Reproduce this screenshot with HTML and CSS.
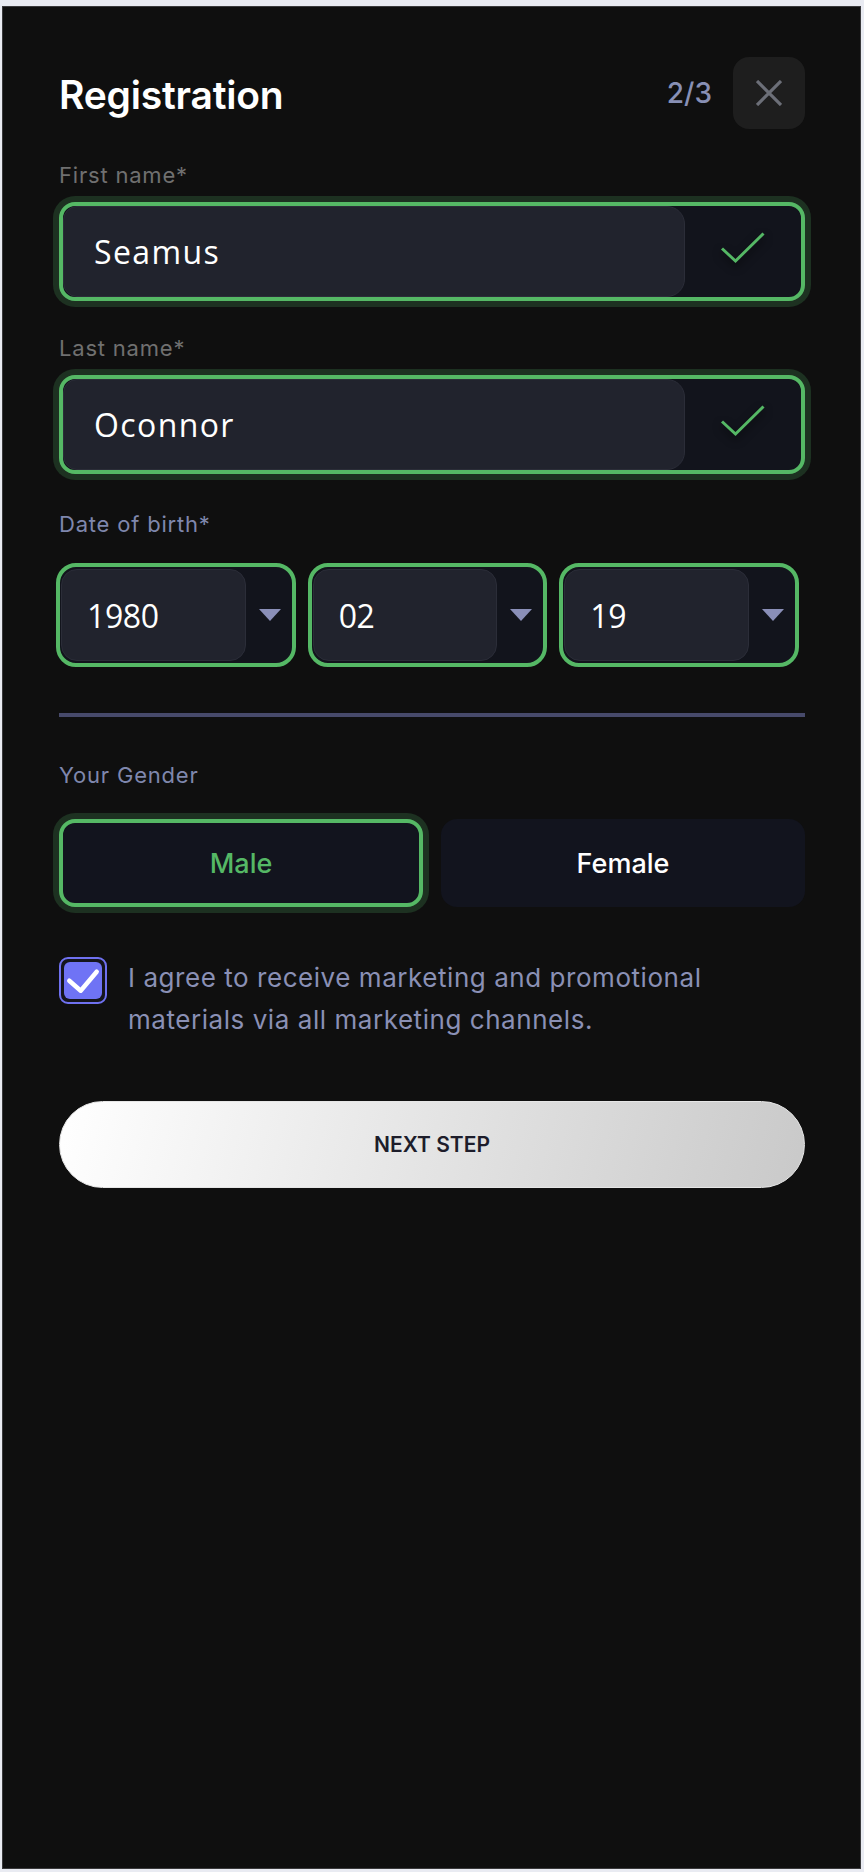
FILE: index.html
```html
<!DOCTYPE html>
<html lang="en">
<head>
<meta charset="utf-8">
<title>Registration</title>
<link rel="stylesheet" href="styles.css">
</head>
<body>
<div class="panel">
  <header class="head">
    <h1 class="title">Registration</h1>
    <div class="head-right">
      <span class="step">2/3</span>
      <button class="close" type="button" aria-label="Close">
        <svg width="26" height="26" viewBox="0 0 26 26"><path d="M1 1 L25 25 M25 1 L1 25" stroke="#6c6f78" stroke-width="3.2" fill="none"/></svg>
      </button>
    </div>
  </header>

  <div class="field">
    <div class="label label-muted">First name*</div>
    <div class="input valid">
      <div class="input-box">Seamus</div>
      <div class="input-status">
        <svg class="check" width="46" height="34" viewBox="0 0 46 34"><polyline points="2,17.5 15.5,30 43.5,2.5" fill="none" stroke="#55b865" stroke-width="3"/></svg>
      </div>
    </div>
  </div>

  <div class="field field-next">
    <div class="label label-muted">Last name*</div>
    <div class="input valid">
      <div class="input-box">Oconnor</div>
      <div class="input-status">
        <svg class="check" width="46" height="34" viewBox="0 0 46 34"><polyline points="2,17.5 15.5,30 43.5,2.5" fill="none" stroke="#55b865" stroke-width="3"/></svg>
      </div>
    </div>
  </div>

  <div class="field field-date">
    <div class="label label-accent label-date">Date of birth*</div>
    <div class="date-row">
      <div class="select">
        <div class="select-box">1980</div>
        <div class="select-arrow"><svg width="22" height="12" viewBox="0 0 22 12"><polygon points="0,0 22,0 11,12" fill="#8a8fb8"/></svg></div>
      </div>
      <div class="select">
        <div class="select-box">02</div>
        <div class="select-arrow"><svg width="22" height="12" viewBox="0 0 22 12"><polygon points="0,0 22,0 11,12" fill="#8a8fb8"/></svg></div>
      </div>
      <div class="select">
        <div class="select-box">19</div>
        <div class="select-arrow"><svg width="22" height="12" viewBox="0 0 22 12"><polygon points="0,0 22,0 11,12" fill="#8a8fb8"/></svg></div>
      </div>
    </div>
  </div>

  <div class="divider"></div>

  <div class="field field-gender">
    <div class="label label-accent label-gender">Your Gender</div>
    <div class="gender-row">
      <button class="gender gender-selected" type="button">Male</button>
      <button class="gender" type="button">Female</button>
    </div>
  </div>

  <label class="consent">
    <span class="checkbox">
      <span class="checkbox-fill">
        <svg width="38" height="38" viewBox="0 0 38 38"><polyline points="5.3,18.7 16.7,28.7 32.7,9.7" fill="none" stroke="#ffffff" stroke-width="4.5" stroke-linecap="round" stroke-linejoin="round"/></svg>
      </span>
    </span>
    <span class="consent-text">I agree to receive marketing and promotional<br>materials via all marketing channels.</span>
  </label>

  <button class="next" type="button">NEXT STEP</button>
</div>
</body>
</html>
```

FILE: styles.css
```css
* {
  box-sizing: border-box;
}

html, body {
  margin: 0;
  padding: 0;
}

body {
  background: #e9ebf2;
  font-family: Inter, "Liberation Sans", sans-serif;
}

.panel {
  margin: 6px 3px 3px 2px;
  height: 1863px;
  background: #0f0f0f;
  border: 1px solid #3a3a3c;
  padding: 50px 55px 0 56px;
}

.head {
  height: 72px;
  display: flex;
  align-items: center;
  justify-content: space-between;
}

.title {
  margin: 0;
  padding-top: 3px;
  font-size: 39px;
  line-height: 46px;
  font-weight: 600;
  color: #ffffff;
  letter-spacing: -0.2px;
}

.head-right {
  display: flex;
  align-items: center;
  gap: 21px;
}

.step {
  font-size: 28px;
  font-weight: 500;
  color: #8890b5;
  line-height: 34px;
}

.close {
  width: 72px;
  height: 72px;
  border: none;
  border-radius: 16px;
  background: #1e1e1e;
  display: flex;
  align-items: center;
  justify-content: center;
  padding: 0;
}

.field {
  margin-top: 32px;
}

.field-next {
  margin-top: 33px;
}

.field-date {
  margin-top: 36px;
}

.label {
  font-size: 22px;
  line-height: 28px;
  font-weight: 400;
  letter-spacing: 0.8px;
  margin-bottom: 13px;
}

.label-muted {
  color: #707070;
}

.label-accent {
  color: #7f87ad;
}

.label-date {
  margin-bottom: 25px;
}

.label-gender {
  margin-bottom: 30px;
}

.input {
  height: 99px;
  display: flex;
  border: 4px solid #55b865;
  border-radius: 16px;
  background: #12141c;
  box-shadow: 0 0 0 6px #1d3121;
}

.input-box {
  flex: 1;
  display: flex;
  align-items: center;
  padding-left: 30px;
  background: #21232d;
  border: 1px solid #2b2d38;
  border-radius: 14px 18px 18px 14px;
  font-family: "Open Sans", "DejaVu Sans", sans-serif;
  font-size: 32px;
  letter-spacing: 1.4px;
  color: #ffffff;
}

.input-status {
  flex: none;
  width: 116px;
  display: flex;
  align-items: center;
  justify-content: center;
}

.check {
  margin-bottom: 8px;
  filter: drop-shadow(0 4px 4px rgba(0, 0, 0, 0.6));
}

.date-row {
  display: grid;
  grid-template-columns: repeat(3, 1fr);
  gap: 12px;
  margin-left: -3px;
  margin-right: 6px;
}

.select {
  height: 104px;
  display: flex;
  border: 4px solid #55b865;
  border-radius: 20px;
  background: #12141c;
  padding: 2px 0 2px 1px;
}

.select-box {
  flex: 1;
  display: flex;
  align-items: center;
  padding-left: 25px;
  background: #21232d;
  border: 1px solid #2b2d38;
  border-radius: 16px;
  font-family: "Open Sans", "DejaVu Sans", sans-serif;
  font-size: 32px;
  letter-spacing: -0.4px;
  color: #ffffff;
}

.select-arrow {
  flex: none;
  width: 46px;
  display: flex;
  align-items: center;
  justify-content: center;
  padding-left: 2px;
}

.divider {
  margin-top: 46px;
  height: 4px;
  background: #474a6b;
}

.field-gender {
  margin-top: 44px;
}

.gender-row {
  display: grid;
  grid-template-columns: 1fr 1fr;
  gap: 18px;
}

.gender {
  height: 88px;
  border: none;
  border-radius: 16px;
  background: #12141e;
  font-family: Inter, "Liberation Sans", sans-serif;
  font-size: 27px;
  font-weight: 500;
  color: #ffffff;
  padding: 0;
}

.gender-selected {
  border: 4px solid #55b865;
  color: #55b865;
  box-shadow: 0 0 0 6px #1d3121;
}

.consent {
  margin-top: 50px;
  display: flex;
  align-items: flex-start;
  gap: 21px;
}

.checkbox {
  flex: none;
  width: 48px;
  height: 47px;
  border: 2px solid #6f71f0;
  border-radius: 9px;
  background: #15151d;
  padding: 3px;
  display: flex;
}

.checkbox-fill {
  flex: 1;
  border-radius: 6px;
  background: #6f73f5;
  display: flex;
  align-items: center;
  justify-content: center;
}

.consent-text {
  font-size: 26px;
  line-height: 42px;
  letter-spacing: 0.55px;
  color: #8a90b5;
}

.next {
  display: block;
  width: 100%;
  margin-top: 60px;
  height: 87px;
  border: 1px solid #e6e6e6;
  border-radius: 44px;
  background: linear-gradient(105deg, #ffffff 0%, #e4e4e4 50%, #c9c9c9 100%);
  font-family: Inter, "Liberation Sans", sans-serif;
  font-size: 21px;
  font-weight: 600;
  color: #1d1d2b;
  padding: 0;
}
```
